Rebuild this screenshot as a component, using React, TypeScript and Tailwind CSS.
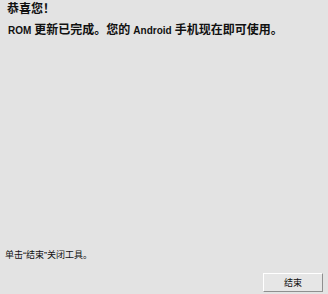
import React from "react";

export default function App() {
  return (
    <div className="w-[328px] h-[294px] bg-[#e3e3e3] text-[#111] flex flex-col overflow-hidden font-['Noto_Sans_CJK_SC',sans-serif]">
      <div className="pl-[7px] pt-[2px] text-[12px] leading-[12px] font-bold">恭喜您！</div>
      <div className="pl-[8px] mt-[9px] text-[12px] leading-[12px] font-bold flex items-baseline whitespace-nowrap">
        <span className="text-[10px] mr-[3px] font-['Liberation_Sans',sans-serif]">ROM</span>
        <span>更新已完成。您的</span>
        <span className="text-[10px] mx-[3px] font-['Liberation_Sans',sans-serif]">Android</span>
        <span>手机现在即可使用。</span>
      </div>
      <div className="mt-auto pl-[5px] text-[9px] leading-[9px] font-['Liberation_Sans','Noto_Sans_CJK_SC',sans-serif]">
        单击“结束”关闭工具。
      </div>
      <div className="flex justify-end pr-[5px] pb-[2px] mt-[13px]">
        <button className="w-[60px] h-[19px] bg-[#e6e6e6] border border-t-white border-l-white border-r-[#8f8f8f] border-b-[#8f8f8f] text-[9px] leading-[9px] flex items-center justify-center">
          结束
        </button>
      </div>
    </div>
  );
}
